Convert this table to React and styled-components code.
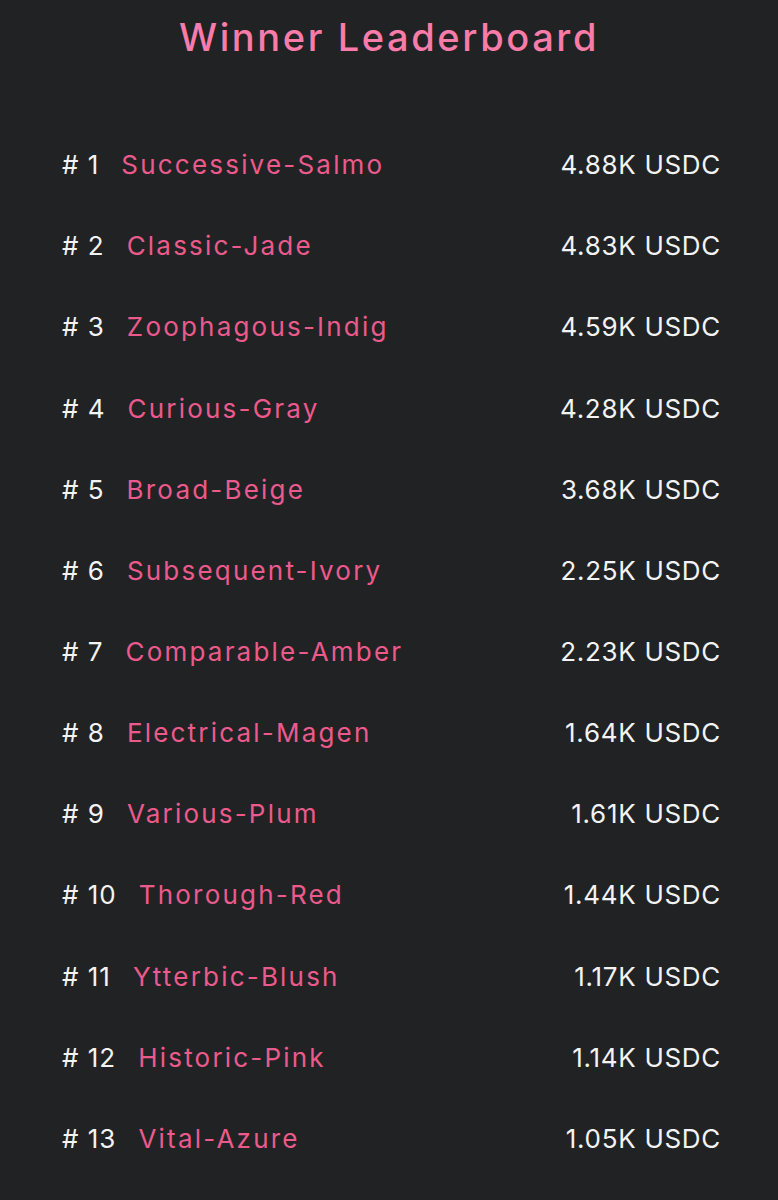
import React from "react";
import styled, { createGlobalStyle } from "styled-components";

const Global = createGlobalStyle`
  html, body { margin: 0; padding: 0; background: #212224; }
  body { font-family: Inter, "Noto Sans", sans-serif; }
`;

const Page = styled.div`
  width: 778px;
  min-height: 1200px;
  background: #212224;
  box-sizing: border-box;
  padding: 15px 57px 0 62px;
`;

const Title = styled.h1`
  margin: 0 0 65px -62px;
  width: 778px;
  text-align: center;
  font-size: 38px;
  line-height: 44px;
  font-weight: 500;
  color: #f87ba8;
  letter-spacing: 2.6px;
`;

const List = styled.ol`
  list-style: none;
  margin: 0;
  padding: 0;
`;

const Row = styled.li`
  height: 81.17px;
  display: flex;
  align-items: center;
  font-size: 26px;
`;

const Rank = styled.span`
  color: #f3f3f3;
  margin-right: 22px;
  letter-spacing: 1px;
`;

const Name = styled.span`
  color: #ec5a8c;
  flex: 1;
  letter-spacing: 2.2px;
`;

const Amount = styled.span`
  color: #f3f3f3;
  letter-spacing: 0.7px;
`;

const data = [
  ["Successive-Salmo", "4.88K"],
  ["Classic-Jade", "4.83K"],
  ["Zoophagous-Indig", "4.59K"],
  ["Curious-Gray", "4.28K"],
  ["Broad-Beige", "3.68K"],
  ["Subsequent-Ivory", "2.25K"],
  ["Comparable-Amber", "2.23K"],
  ["Electrical-Magen", "1.64K"],
  ["Various-Plum", "1.61K"],
  ["Thorough-Red", "1.44K"],
  ["Ytterbic-Blush", "1.17K"],
  ["Historic-Pink", "1.14K"],
  ["Vital-Azure", "1.05K"],
];

export default function App() {
  return (
    <Page>
      <Global />
      <Title>Winner Leaderboard</Title>
      <List>
        {data.map(([name, amt], i) => (
          <Row key={name}>
            <Rank># {i + 1}</Rank>
            <Name>{name}</Name>
            <Amount>{amt} USDC</Amount>
          </Row>
        ))}
      </List>
    </Page>
  );
}
